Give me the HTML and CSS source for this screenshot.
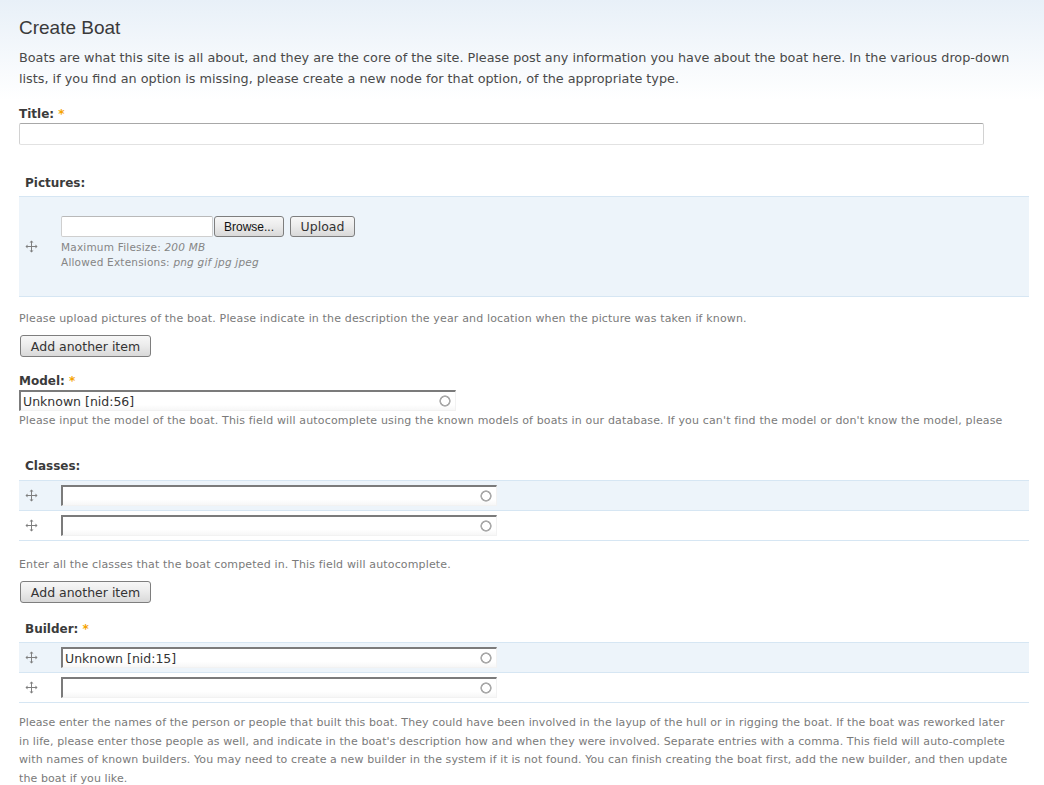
FILE: index.html
```html
<!DOCTYPE html>
<html>
<head>
<meta charset="utf-8">
<title>Create Boat</title>
<link rel="stylesheet" href="styles.css">
</head>
<body>
<div class="page">
  <h1 class="title">Create Boat</h1>
  <p class="intro">Boats are what this site is all about, and they are the core of the site. Please post any information you have about the boat here. In the various drop-down lists, if you find an option is missing, please create a new node for that option, of the appropriate type.</p>

  <div class="field field-title">
    <label class="label">Title: <span class="req">*</span></label>
    <input class="text title-input" type="text">
  </div>

  <div class="field field-pictures">
    <div class="label indent">Pictures:</div>
    <div class="mtable">
      <div class="mrow odd tall">
        <div class="handle"><svg width="13" height="13" viewBox="0 0 13 13"><path d="M6.5 2v9M2 6.5h9" stroke="#7f7f7f" stroke-width="1"/><path d="M6.5 0.5l-2 2h4zM6.5 12.5l-2-2h4zM0.5 6.5l2-2v4zM12.5 6.5l-2-2v4z" fill="#7f7f7f"/></svg></div>
        <div class="cell upload-cell">
          <div class="upload-row">
            <span class="file-box"></span><span class="btn browse">Browse...</span><span class="btn upload">Upload</span>
          </div>
          <div class="filedesc first">Maximum Filesize: <em>200 MB</em></div>
          <div class="filedesc">Allowed Extensions: <em>png gif jpg jpeg</em></div>
        </div>
      </div>
    </div>
    <div class="desc desc-pictures">Please upload pictures of the boat. Please indicate in the description the year and location when the picture was taken if known.</div>
    <span class="btn add">Add another item</span>
  </div>

  <div class="field field-model">
    <label class="label">Model: <span class="req">*</span></label>
    <input class="text auto model-input" type="text" value="Unknown [nid:56]">
    <div class="desc desc-model">Please input the model of the boat. This field will autocomplete using the known models of boats in our database. If you can't find the model or don't know the model, please</div>
  </div>

  <div class="field field-classes">
    <div class="label indent">Classes:</div>
    <div class="mtable">
      <div class="mrow odd">
        <div class="handle"><svg width="13" height="13" viewBox="0 0 13 13"><path d="M6.5 2v9M2 6.5h9" stroke="#7f7f7f" stroke-width="1"/><path d="M6.5 0.5l-2 2h4zM6.5 12.5l-2-2h4zM0.5 6.5l2-2v4zM12.5 6.5l-2-2v4z" fill="#7f7f7f"/></svg></div>
        <div class="cell"><input class="text auto row-input" type="text"></div>
      </div>
      <div class="mrow even">
        <div class="handle"><svg width="13" height="13" viewBox="0 0 13 13"><path d="M6.5 2v9M2 6.5h9" stroke="#7f7f7f" stroke-width="1"/><path d="M6.5 0.5l-2 2h4zM6.5 12.5l-2-2h4zM0.5 6.5l2-2v4zM12.5 6.5l-2-2v4z" fill="#7f7f7f"/></svg></div>
        <div class="cell"><input class="text auto row-input" type="text"></div>
      </div>
    </div>
    <div class="desc desc-classes">Enter all the classes that the boat competed in. This field will autocomplete.</div>
    <span class="btn add">Add another item</span>
  </div>

  <div class="field field-builder">
    <div class="label indent">Builder: <span class="req">*</span></div>
    <div class="mtable">
      <div class="mrow odd">
        <div class="handle"><svg width="13" height="13" viewBox="0 0 13 13"><path d="M6.5 2v9M2 6.5h9" stroke="#7f7f7f" stroke-width="1"/><path d="M6.5 0.5l-2 2h4zM6.5 12.5l-2-2h4zM0.5 6.5l2-2v4zM12.5 6.5l-2-2v4z" fill="#7f7f7f"/></svg></div>
        <div class="cell"><input class="text auto row-input" type="text" value="Unknown [nid:15]"></div>
      </div>
      <div class="mrow even">
        <div class="handle"><svg width="13" height="13" viewBox="0 0 13 13"><path d="M6.5 2v9M2 6.5h9" stroke="#7f7f7f" stroke-width="1"/><path d="M6.5 0.5l-2 2h4zM6.5 12.5l-2-2h4zM0.5 6.5l2-2v4zM12.5 6.5l-2-2v4z" fill="#7f7f7f"/></svg></div>
        <div class="cell"><input class="text auto row-input" type="text"></div>
      </div>
    </div>
    <div class="desc desc-builder">Please enter the names of the person or people that built this boat. They could have been involved in the layup of the hull or in rigging the boat. If the boat was reworked later in life, please enter those people as well, and indicate in the boat's description how and when they were involved. Separate entries with a comma. This field will auto-complete with names of known builders. You may need to create a new builder in the system if it is not found. You can finish creating the boat first, add the new builder, and then update the boat if you like.</div>
  </div>
</div>
</body>
</html>
```
FILE: styles.css
```css
html, body {
  margin: 0;
  padding: 0;
}
body {
  background: linear-gradient(to bottom, #e8f0f8 0px, #ffffff 100px) no-repeat #ffffff;
  font-family: "DejaVu Sans", Verdana, sans-serif;
  color: #494949;
  min-height: 785px;
}
.page {
  padding: 16px 15px 0 19px;
}
.title {
  margin: 0;
  font-family: "Liberation Sans", Arial, sans-serif;
  font-weight: normal;
  font-size: 19px;
  line-height: 24px;
  color: #3a3a3a;
}
.intro {
  margin: 7px 0 0;
  font-size: 12.8px;
  line-height: 21px;
  color: #494949;
}
.label {
  display: block;
  font-size: 12px;
  font-weight: bold;
  line-height: 18px;
  color: #3b3b3b;
}
.label.indent {
  padding-left: 6px;
}
.req {
  color: #f5a300;
  font-weight: bold;
}
.field-title {
  margin-top: 16px;
}
.field-title .label {
  margin-bottom: 0;
}
.text {
  box-sizing: border-box;
  display: block;
  margin: 0;
  font-family: "DejaVu Sans", Verdana, sans-serif;
  font-size: 12.5px;
  color: #333;
  outline: none;
}
.title-input {
  width: 965px;
  height: 22px;
  border: 1px solid #d2d2d2;
  border-top-color: #a8a8a8;
  border-bottom-color: #e2e2e2;
  border-radius: 2px;
  background: #fff;
}
.auto {
  height: 21px;
  padding: 0 0 0 2px;
  border-style: solid;
  border-width: 2px 1px 1px 2px;
  border-color: #7b7b7b #f2f2f2 #f2f2f2 #7b7b7b;
  background:
    radial-gradient(circle at calc(100% - 10px) 50%, transparent 3.6px, #a9a9a9 4.2px, #a9a9a9 5.3px, transparent 5.9px),
    linear-gradient(to bottom, #ffffff 70%, #f7f7f7 100%);
}
.field-pictures {
  margin-top: 29px;
}
.field-pictures .label {
  margin-bottom: 4px;
}
.field-builder .label {
  margin-bottom: 4px;
}
.field-classes .label {
  margin-bottom: 5px;
}
.mtable {
  border-top: 1px solid #d6e6f3;
}
.mrow {
  display: flex;
  align-items: center;
  border-bottom: 1px solid #d6e6f3;
  height: 29px;
}
.mrow.odd {
  background: #edf4fa;
}
.mrow.even {
  background: #ffffff;
}
.mrow.tall {
  height: auto;
}
.handle {
  width: 42px;
  flex: none;
  box-sizing: border-box;
  padding-left: 6px;
  display: flex;
  align-items: center;
}
.handle svg {
  display: block;
}
.cell {
  flex: 1;
}
.upload-cell {
  padding: 19px 0 26px;
}
.upload-row {
  display: flex;
  align-items: center;
  height: 21px;
}
.file-box {
  box-sizing: border-box;
  width: 152px;
  height: 21px;
  border: 1px solid #cfcfcf;
  border-top-color: #b9b9b9;
  border-radius: 2px;
  background: #fff;
}
.btn {
  box-sizing: border-box;
  display: inline-flex;
  align-items: center;
  justify-content: center;
  height: 21px;
  border: 1px solid #7e7e7e;
  border-radius: 3px;
  background: linear-gradient(to bottom, #f7f7f7 0%, #ececec 45%, #d9d9d9 100%);
  color: #333;
  font-family: "DejaVu Sans", Verdana, sans-serif;
  font-size: 12px;
}
.browse {
  width: 70px;
  margin-left: 1px;
  font-family: "Liberation Sans", Arial, sans-serif;
  font-size: 12px;
  color: #111;
}
.upload {
  width: 65px;
  margin-left: 6px;
  font-size: 12.5px;
}
.filedesc {
  font-size: 10.5px;
  letter-spacing: 0.2px;
  line-height: 15px;
  color: #858585;
}
.filedesc.first {
  margin-top: 3px;
}
.filedesc em {
  font-style: italic;
}
.desc {
  font-size: 11px;
  letter-spacing: 0.15px;
  line-height: 21px;
  color: #7a7a7a;
}
.desc-pictures {
  margin-top: 11px;
}
.add {
  width: 131px;
  height: 22px;
  margin: 6px 0 0 1px;
  font-size: 12.5px;
}
.field-model {
  margin-top: 15px;
}
.model-input {
  width: 437px;
}
.desc-model {
  margin-top: -1px;
}
.field-classes {
  margin-top: 26px;
}
.row-input {
  width: 436px;
}
.desc-classes {
  margin-top: 13px;
}
.field-builder {
  margin-top: 17px;
}
.desc-builder {
  width: 992px;
  margin-top: 11px;
  letter-spacing: 0.1px;
  line-height: 18.5px;
}
```
